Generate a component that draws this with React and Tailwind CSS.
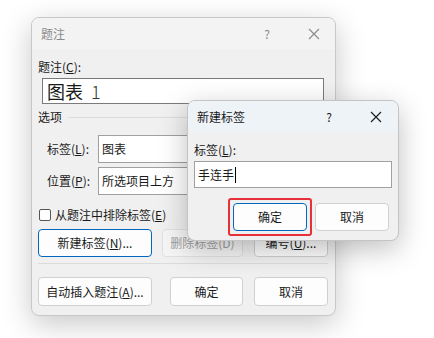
import React from "react";

const font = { fontFamily: '"Noto Sans CJK SC", "Noto Sans", sans-serif' };

function Btn({ children, className = "", disabled = false, focused = false }) {
  return (
    <div
      className={
        "flex items-center justify-center rounded-[4px] text-[12px] leading-none " +
        (focused
          ? "border border-[#0067c0] bg-[#fdfdfd] text-[#1a1a1a] "
          : disabled
          ? "border border-[#e0e0e0] bg-[#f5f5f5] text-[#a0a0a0] "
          : "border border-[#d0d0d0] bg-[#fdfdfd] text-[#1a1a1a] ") +
        className
      }
    >
      {children}
    </div>
  );
}

function CloseIcon({ color }) {
  return (
    <svg width="12" height="12" viewBox="0 0 12 12">
      <path d="M1 1 L11 11 M11 1 L1 11" stroke={color} strokeWidth="1.1" fill="none" />
    </svg>
  );
}

export default function App() {
  return (
    <div className="relative h-[338px] w-[434px] overflow-hidden bg-white text-[#1a1a1a]" style={font}>
      {/* Main dialog */}
      <div className="ml-[31px] mt-[17px] flex h-[299px] w-[305px] flex-col overflow-hidden rounded-[8px] border border-[#c8c8c8] bg-[#f0f0f0] shadow-[0_8px_30px_rgba(0,0,0,0.22)]">
        <div className="flex h-[31px] shrink-0 items-center bg-[#f3f3f3] pl-[9px]">
          <span className="text-[12px] text-[#8a8a8a]">题注</span>
          <span className="ml-auto text-[12px] text-[#8a8a8a]">?</span>
          <span className="ml-[38px] mr-[15px] flex items-center">
            <CloseIcon color="#8a8a8a" />
          </span>
        </div>
        <div className="flex flex-col pl-[6px] pr-[7px]">
          <div className="mt-[10px] text-[12px] leading-[16px]">
            题注(<span className="underline">C</span>):
          </div>
          <div className="ml-[4px] mt-[3px] flex h-[26px] w-[282px] items-center border border-[#7a7a7a] bg-white pl-[4px] text-[18px] leading-none">
            图表 <span className="ml-[8px] font-light text-[#333]">1</span>
          </div>
          <div className="mt-[5px] flex items-center">
            <span className="text-[12px] leading-[16px]">选项</span>
            <div className="ml-[6px] h-px flex-1 bg-[#dcdcdc]" />
          </div>
          <div className="mt-[10px] flex items-center">
            <span className="ml-[9px] w-[51px] text-[12px]">
              标签(<span className="underline">L</span>):
            </span>
            <div className="flex h-[28px] flex-1 items-center border border-[#a0a0a0] bg-white pl-[3px] text-[12px]">图表</div>
          </div>
          <div className="mt-[4px] flex items-center">
            <span className="ml-[9px] w-[51px] text-[12px]">
              位置(<span className="underline">P</span>):
            </span>
            <div className="flex h-[28px] flex-1 items-center border border-[#a0a0a0] bg-white pl-[3px] text-[12px]">所选项目上方</div>
          </div>
          <div className="mt-[14px] flex items-center">
            <div className="ml-[1px] h-[12px] w-[12px] rounded-[2px] border border-[#555] bg-white" />
            <span className="ml-[4px] text-[12px] leading-none">
              从题注中排除标签(<span className="underline">E</span>)
            </span>
          </div>
          <div className="mt-[8px] flex">
            <Btn focused className="h-[28px] w-[114px]">
              新建标签(<span className="underline">N</span>)...
            </Btn>
            <Btn disabled className="ml-[10px] h-[28px] w-[81px]">删除标签(D)</Btn>
            <Btn className="ml-[11px] h-[28px] w-[74px]">
              编号(<span className="underline">U</span>)...
            </Btn>
          </div>
          <div className="mt-[6px] h-px bg-[#dcdcdc]" />
          <div className="mt-[13px] flex">
            <Btn className="h-[29px] w-[114px]">
              自动插入题注(<span className="underline">A</span>)...
            </Btn>
            <Btn className="ml-[18px] h-[29px] w-[73px]">确定</Btn>
            <Btn className="ml-[11px] h-[29px] w-[74px]">取消</Btn>
          </div>
        </div>
      </div>

      {/* New label dialog */}
      <div className="absolute left-[187px] top-[100px] flex h-[141px] w-[212px] flex-col overflow-hidden rounded-[8px] border border-[#c4c4c4] bg-[#f0f0f0] shadow-[0_8px_28px_rgba(0,0,0,0.25)]">
        <div className="flex h-[31px] shrink-0 items-center bg-[#eef3f8] pl-[9px]">
          <span className="text-[12px] text-[#1a1a1a]">新建标签</span>
          <span className="ml-auto text-[12px] text-[#1a1a1a]">?</span>
          <span className="ml-[38px] mr-[16px] flex items-center">
            <CloseIcon color="#1a1a1a" />
          </span>
        </div>
        <div className="flex flex-col pl-[6px] pr-[6px]">
          <div className="mt-[10px] text-[12px] leading-[16px]">
            标签(<span className="underline">L</span>):
          </div>
          <div className="mt-[3px] flex h-[27px] items-center border border-[#a0a0a0] bg-white pl-[3px] text-[12px]">
            手连手<span className="ml-[1px] h-[16px] w-px bg-black" />
          </div>
          <div className="mt-[10px] flex">
            <div className="ml-[34px] rounded-[3px] border-2 border-[#e8303a] p-[3px]">
              <Btn focused className="h-[28px] w-[74px]">确定</Btn>
            </div>
            <Btn className="ml-[3px] mt-[5px] h-[28px] w-[74px]">取消</Btn>
          </div>
        </div>
      </div>
    </div>
  );
}
